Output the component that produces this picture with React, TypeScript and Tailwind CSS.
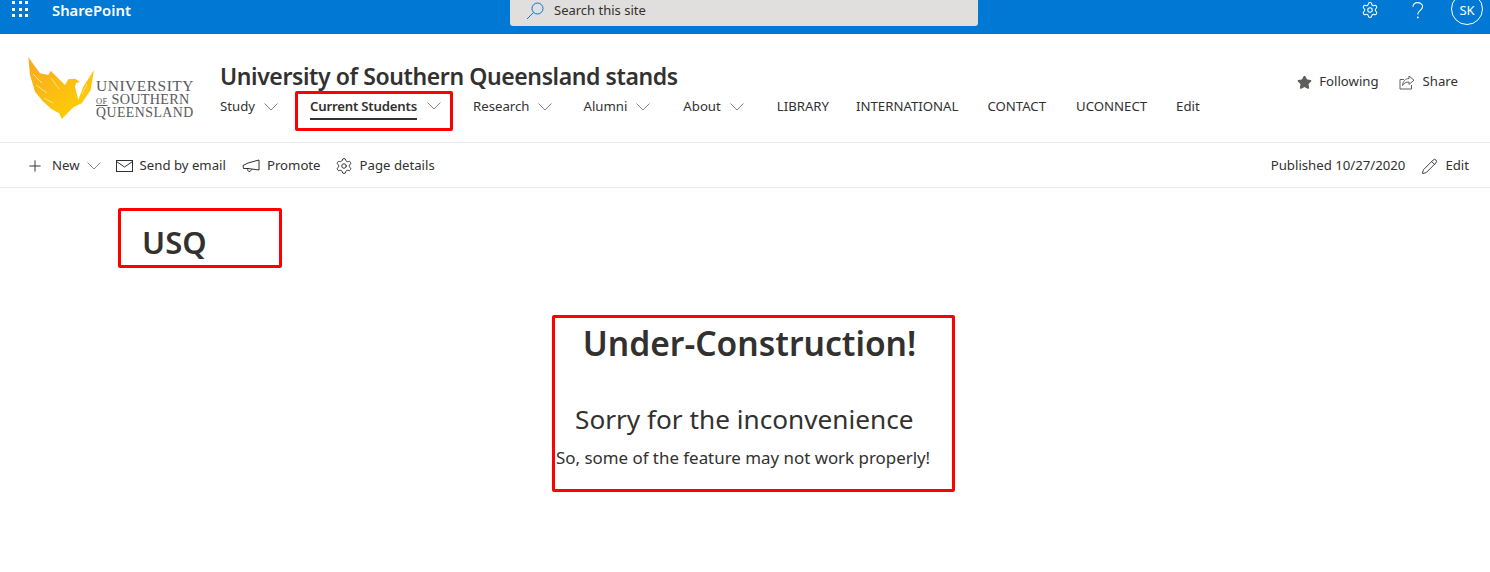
import { Plus, Settings, Star, Pencil } from 'lucide-react'

const font = { fontFamily: '"Noto Sans", "Open Sans", sans-serif' }

function Chevron({ className = '' }: { className?: string }) {
  return (
    <svg width="14" height="8" viewBox="0 0 14 8" fill="none" stroke="#8a8886" strokeWidth="1" className={className}>
      <path d="M.5 .5l6.5 6.5 6.5-6.5" />
    </svg>
  )
}

function Phoenix() {
  return (
    <svg width="68" height="64" viewBox="0 0 68 64" className="shrink-0">
      <defs>
        <linearGradient id="ph" x1="0" y1="0" x2="0.75" y2="0.9">
          <stop offset="0" stopColor="#f7a823" />
          <stop offset="1" stopColor="#ffcd05" />
        </linearGradient>
      </defs>
      <path fill="url(#ph)" d="M1.3 1.3L13 17.3 21.3 19 23.7 14.7 38 29 41.3 23.3 48 22.7 53 25.7 49 27.3 48 30.7 51.3 44 56.3 30.7 67 14 63.7 34 54.7 47.3 46.3 51.3 34.7 63.3 32.3 57.3 24.7 53.3 16.3 45.7 8 35.7 3 19z" />
      <path fill="none" stroke="#ffe08a" strokeWidth="1" d="M6 18l9 9M9 29l11 8M17 42l9 5M24 22l8 11M60 28l-5 10" />
    </svg>
  )
}

function NavLink({ label, className = '' }: { label: string; className?: string }) {
  return <span className={`h-[32px] flex items-center whitespace-nowrap text-[13.2px] text-[#323130] ${className}`}>{label}</span>
}

function NavDrop({ label, ml, gap }: { label: string; ml: string; gap: string }) {
  return (
    <span className={`flex items-center h-[32px] ${ml}`}>
      <NavLink label={label} />
      <Chevron className={gap} />
    </span>
  )
}

export default function App() {
  return (
    <div style={font} className="w-[1490px] h-[572px] overflow-hidden bg-white text-[#323130]">
      {/* suite bar */}
      <div className="h-[34px] bg-[#0078d4] flex items-start text-white">
        <div className="ml-[12px] mt-[1px] grid grid-cols-3 gap-[3.5px] w-[16px]">
          {Array.from({ length: 9 }).map((_, i) => (
            <span key={i} className="w-[3px] h-[3px] bg-white" />
          ))}
        </div>
        <span className="ml-[24px] w-[79px] whitespace-nowrap text-[14.8px] leading-[21px] font-semibold">SharePoint</span>
        <div className="ml-[379px] w-[468px] h-[26px] bg-[#e1dfdd] rounded-b-[3px] flex items-center pl-[16px] pb-[4px] text-[#323130] text-[13px]">
          <svg width="18" height="18" viewBox="0 0 18 18" fill="none" stroke="#0078d4" strokeWidth="1">
            <circle cx="11.5" cy="6.5" r="5.5" />
            <path d="M7.5 10.5L1 17" />
          </svg>
          <span className="ml-[10px]">Search this site</span>
        </div>
        <div className="ml-auto flex items-start pr-[7px]">
          <Settings size={18} strokeWidth={1.4} className="mt-[1px]" />
          <svg width="12" height="17" viewBox="0 0 12 17" fill="none" stroke="#ffffff" strokeWidth="1.1" className="ml-[33px] mt-[2px]">
            <path d="M1 4.8C1 2.2 3 .6 5.6 .6S10.6 2.3 10.6 4.6c0 2-1.3 3-2.6 4S5.8 10.4 5.8 12.4" />
            <circle cx="5.8" cy="15.4" r=".9" fill="#ffffff" stroke="none" />
          </svg>
          <span className="ml-[27px] -mt-[7px] w-[32px] h-[32px] rounded-full border border-white flex items-center justify-center text-[13px]">
            <span className="mt-[3px]">SK</span>
          </span>
        </div>
      </div>

      {/* site header */}
      <div className="h-[109px] border-b border-[#edebe9] flex">
        <div className="ml-[27px] mt-[22px] w-[193px] flex items-start">
          <Phoenix />
          <div className="ml-[1px] mt-[23px] flex flex-col text-[#58595b] leading-[13px] whitespace-nowrap" style={{ fontFamily: '"Liberation Serif", serif' }}>
            <span className="h-[14px] text-[15.5px] tracking-[0.5px]">UNIVERSITY</span>
            <span className="h-[13px] text-[14.2px] tracking-[0.3px]"><span className="text-[8.5px] underline mr-[4px]">OF</span>SOUTHERN</span>
            <span className="h-[13px] text-[13.8px] tracking-[0.5px]">QUEENSLAND</span>
          </div>
        </div>
        <div className="flex flex-col">
          <h1 className="mt-[26px] whitespace-nowrap text-[23px] leading-[32px] font-semibold tracking-[-0.4px]">University of Southern Queensland stands</h1>
          <nav className="flex items-start -mt-[1px]">
            <NavDrop label="Study" ml="" gap="ml-[9px]" />
            <span className="ml-[17px] w-[158px] h-[40px] border-[3px] border-[#fe0000] rounded-[2px] flex items-center pl-[12px] pb-[11px]">
              <span className="relative whitespace-nowrap text-[13.2px] leading-5 font-semibold tracking-[-0.2px]">
                Current Students
                <span className="absolute left-0 right-0 -bottom-[4px] h-[2px] bg-[#323130]" />
              </span>
              <Chevron className="ml-[10px]" />
            </span>
            <NavDrop label="Research" ml="ml-[20px]" gap="ml-[9px]" />
            <NavDrop label="Alumni" ml="ml-[31px]" gap="ml-[9px]" />
            <NavDrop label="About" ml="ml-[33px]" gap="ml-[9px]" />
            <NavLink label="LIBRARY" className="ml-[33px]" />
            <NavLink label="INTERNATIONAL" className="ml-[27px]" />
            <NavLink label="CONTACT" className="ml-[29px]" />
            <NavLink label="UCONNECT" className="ml-[30px]" />
            <NavLink label="Edit" className="ml-[29px]" />
          </nav>
        </div>
        <div className="ml-auto mr-[32px] mt-[38px] flex items-center h-[20px] text-[13.2px]">
          <Star size={15} className="fill-[#605e5c] text-[#605e5c]" />
          <span className="ml-[7px]">Following</span>
          <svg width="16" height="15" viewBox="0 0 16 15" fill="none" stroke="#605e5c" strokeWidth="1" className="ml-[20px]">
            <path d="M5 4.5H1v9.5h11.5V10" />
            <path d="M10 1l5 4.2-5 4.2V7C7 7 5 8 3.6 10.500 3.800 6.500 6.300 3.500 10 3.500z" />
          </svg>
          <span className="ml-[8px]">Share</span>
        </div>
      </div>

      {/* command bar */}
      <div className="h-[45px] border-b border-[#edebe9] flex items-center pl-[26px] pr-[21px] pt-[2px] text-[13.2px]">
        <Plus size={18} strokeWidth={1.3} />
        <span className="ml-[8px]">New</span>
        <Chevron className="ml-[7px]" />
        <svg width="17" height="12" viewBox="0 0 17 12" fill="none" stroke="#323130" strokeWidth="1" className="ml-[15px]">
          <rect x=".5" y=".5" width="16" height="11" />
          <path d="M.5 1.500L8.500 7l8-5.500" />
        </svg>
        <span className="ml-[7px]">Send by email</span>
        <svg width="18" height="14" viewBox="0 0 18 14" fill="none" stroke="#323130" strokeWidth="1" className="ml-[16px]">
          <path d="M17 1v10L6 9.5H1.500L1 6.500 6 4zM6 9.500c-1 2 0 3 2 3l2-2.300" />
        </svg>
        <span className="ml-[7px]">Promote</span>
        <Settings size={18} strokeWidth={1.3} className="ml-[14px]" />
        <span className="ml-[7px]">Page details</span>
        <span className="ml-auto">Published 10/27/2020</span>
        <Pencil size={17} strokeWidth={1.3} className="ml-[16px]" />
        <span className="ml-[7px]">Edit</span>
      </div>

      {/* page body */}
      <div className="ml-[118px] mt-[20px] w-[164px] h-[60px] border-[3px] border-[#fe0000] rounded-[2px] pl-[21px] pt-[11px] text-[31px] leading-[40px] font-semibold">USQ</div>
      <div className="ml-[552px] mt-[47px] w-[403px] h-[177px] border-[3px] border-[#fe0000] rounded-[2px] flex flex-col">
        <div className="mt-[1px] pr-[8px] text-center whitespace-nowrap text-[33.6px] leading-[48px] font-semibold">Under-Construction!</div>
        <div className="mt-[34px] ml-[20px] whitespace-nowrap text-[26.2px] leading-[36px]">Sorry for the inconvenience</div>
        <div className="mt-[9px] ml-[1px] whitespace-nowrap text-[16.9px] leading-[24px]">So, some of the feature may not work properly!</div>
      </div>
    </div>
  )
}
